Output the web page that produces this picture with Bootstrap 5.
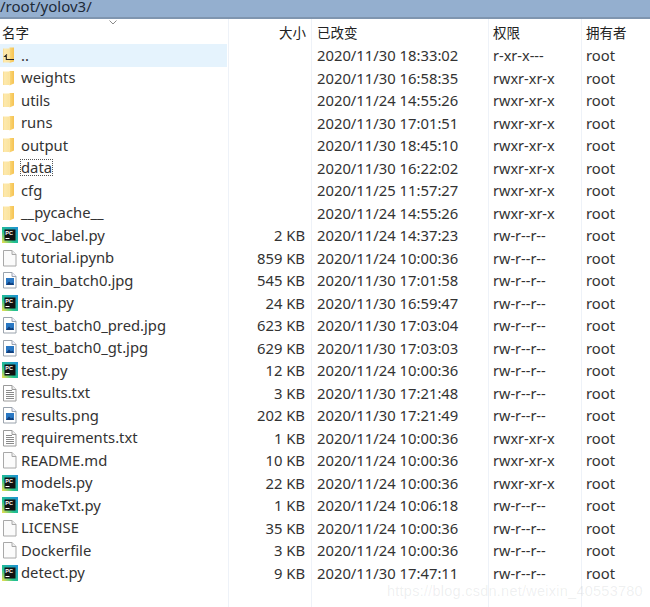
<!DOCTYPE html>
<html lang="zh"><head><meta charset="utf-8"><title>yolov3</title>
<link href="https://cdn.jsdelivr.net/npm/bootstrap@5.3.0/dist/css/bootstrap.min.css" rel="stylesheet">
<style>
html,body{margin:0;height:607px;overflow:hidden;background:#fff}
body{font-family:"Noto Sans","Noto Sans CJK SC",sans-serif;font-size:14.8px;color:#333;position:relative}
.pathbar{height:19px;background:#94afcf;border-bottom:2px solid #7f95af;line-height:12px;font-size:15px;color:#1d2a38;overflow:hidden;white-space:nowrap}
.grid-wrap{height:588px;position:relative}
.gline{position:absolute;top:0;bottom:0;width:1px;background:#eef2f8}
.hdr,.frow{display:grid;grid-template-columns:228px 84px 176px 93px 69px;white-space:nowrap}
.hdr{height:25px;padding-top:1px;align-items:center;font-size:13.5px;font-family:"Noto Sans CJK SC","Noto Sans",sans-serif;color:#222;position:relative}
.frow{height:22.5px;line-height:22.5px;align-items:center}
.cell-name{display:flex;align-items:center;padding-left:2px;gap:3px;height:22.5px}
.cell-name svg{flex:none;width:16px;height:18px}
.cell-name span{position:relative;top:-.5px}
.cell-size{text-align:right;padding-right:7px}
.cell-date{padding-left:5px}
.cell-perm{padding-left:5px;font-size:14.5px}
.cell-own{padding-left:5px}
.sel .cell-name{background:#e5f3fd;margin-right:1px}
.focused{outline:1px dotted #555;outline-offset:-1px;padding:0 1px;line-height:17px;margin-left:-1px}
.sortmark{position:absolute;left:109px;top:1px;width:8px;height:5px}
.hname{padding-left:2px}.hsize{text-align:right;padding-right:6px}.hcol{padding-left:5px}
.wmark{position:absolute;left:387px;top:581px;font-family:"Liberation Sans",sans-serif;font-size:14.5px;letter-spacing:.25px;color:rgba(90,100,110,.1);white-space:nowrap}
</style></head>
<body>
<svg width="0" height="0" class="position-absolute">
<defs>
<linearGradient id="fg" x1="0" x2="1"><stop offset="0" stop-color="#f8d98a"/><stop offset=".25" stop-color="#fde9ae"/><stop offset="1" stop-color="#fbe39c"/></linearGradient>
<linearGradient id="fr" x1="0" x2="1"><stop offset="0" stop-color="#fbd878"/><stop offset="1" stop-color="#f5c253"/></linearGradient>
<linearGradient id="pg" x1="0" y1="1" x2="1" y2="0"><stop offset="0" stop-color="#f5e04a"/><stop offset=".4" stop-color="#21c28e"/><stop offset="1" stop-color="#1f8fd8"/></linearGradient>
<symbol id="i-folder" viewBox="0 0 16 18"><path d="M1 2.500h6.500v13.500H1z" fill="url(#fg)"/><path d="M7.500 2h4.500v12.500l-4.500 2z" fill="url(#fr)"/></symbol>
<symbol id="i-up" viewBox="0 0 16 18"><path d="M1 2.500h6.500v14H1z" fill="url(#fg)"/><path d="M7.500 1.500h4.500v14l-4.500 1.500z" fill="url(#fr)"/><path d="M5 8.500L2.800 10.500H4.300V13.500H12" fill="none" stroke="#222" stroke-width="1.100"/></symbol>
<symbol id="i-pc" viewBox="0 0 16 18"><rect x="0" y="1" width="16" height="16" fill="url(#pg)"/><rect x="2.500" y="3.500" width="11" height="11" fill="#111"/><text x="3.300" y="9" font-family="Liberation Sans,sans-serif" font-size="5.500" font-weight="700" fill="#fff">PC</text><rect x="3.500" y="12" width="4" height="1" fill="#fff"/></symbol>
<symbol id="i-file" viewBox="0 0 16 18"><path d="M1.500 1.500h8.500l4 4v11.500H1.500z" fill="#fbfbfb" stroke="#a8a8a8"/><path d="M10 1.500v4h4" fill="#eee" stroke="#a8a8a8"/></symbol>
<symbol id="i-text" viewBox="0 0 16 18"><path d="M1.500 1.500h8.500l4 4v11.500H1.500z" fill="#fff" stroke="#9a9a9a"/><path d="M10 1.500v4h4" fill="#eee" stroke="#9a9a9a"/><path d="M4 6.500h6M4 8.500h8M4 10.500h8M4 12.500h8M4 14.500h8" stroke="#8a8a8a"/></symbol>
<symbol id="i-img" viewBox="0 0 16 18"><path d="M1.500 1.500h8.500l4 4v11.500H1.500z" fill="#fff" stroke="#9aa3ad"/><path d="M10 1.500v4h4" fill="#eef" stroke="#9aa3ad"/><rect x="4" y="7" width="8" height="7" fill="#2a78c4"/><path d="M4 14l3-3.500 2 2 1.500-1 1.500 2.500z" fill="#123f7c"/></symbol>
</defs></svg>
<div class="pathbar">/root/yolov3/</div>
<div class="grid-wrap">
<span class="gline" style="left:228px"></span><span class="gline" style="left:311px"></span><span class="gline" style="left:488px"></span><span class="gline" style="left:581px"></span>
<div class="hdr"><svg class="sortmark" viewBox="0 0 8 5"><path d="M.5.500L4 4 7.500.500" fill="none" stroke="#8a8a8a"/></svg><div class="hname">名字</div><div class="hsize">大小</div><div class="hcol">已改变</div><div class="hcol">权限</div><div class="hcol">拥有者</div></div>
<div class="frow sel"><div class="cell-name"><svg><use href="#i-up"/></svg><span>..</span></div><div class="cell-size"></div><div class="cell-date">2020/11/30 18:33:02</div><div class="cell-perm">r-xr-x---</div><div class="cell-own">root</div></div>
<div class="frow"><div class="cell-name"><svg><use href="#i-folder"/></svg><span>weights</span></div><div class="cell-size"></div><div class="cell-date">2020/11/30 16:58:35</div><div class="cell-perm">rwxr-xr-x</div><div class="cell-own">root</div></div>
<div class="frow"><div class="cell-name"><svg><use href="#i-folder"/></svg><span>utils</span></div><div class="cell-size"></div><div class="cell-date">2020/11/24 14:55:26</div><div class="cell-perm">rwxr-xr-x</div><div class="cell-own">root</div></div>
<div class="frow"><div class="cell-name"><svg><use href="#i-folder"/></svg><span>runs</span></div><div class="cell-size"></div><div class="cell-date">2020/11/30 17:01:51</div><div class="cell-perm">rwxr-xr-x</div><div class="cell-own">root</div></div>
<div class="frow"><div class="cell-name"><svg><use href="#i-folder"/></svg><span>output</span></div><div class="cell-size"></div><div class="cell-date">2020/11/30 18:45:10</div><div class="cell-perm">rwxr-xr-x</div><div class="cell-own">root</div></div>
<div class="frow"><div class="cell-name"><svg><use href="#i-folder"/></svg><span class="focused">data</span></div><div class="cell-size"></div><div class="cell-date">2020/11/30 16:22:02</div><div class="cell-perm">rwxr-xr-x</div><div class="cell-own">root</div></div>
<div class="frow"><div class="cell-name"><svg><use href="#i-folder"/></svg><span>cfg</span></div><div class="cell-size"></div><div class="cell-date">2020/11/25 11:57:27</div><div class="cell-perm">rwxr-xr-x</div><div class="cell-own">root</div></div>
<div class="frow"><div class="cell-name"><svg><use href="#i-folder"/></svg><span>__pycache__</span></div><div class="cell-size"></div><div class="cell-date">2020/11/24 14:55:26</div><div class="cell-perm">rwxr-xr-x</div><div class="cell-own">root</div></div>
<div class="frow"><div class="cell-name"><svg><use href="#i-pc"/></svg><span>voc_label.py</span></div><div class="cell-size">2 KB</div><div class="cell-date">2020/11/24 14:37:23</div><div class="cell-perm">rw-r--r--</div><div class="cell-own">root</div></div>
<div class="frow"><div class="cell-name"><svg><use href="#i-file"/></svg><span>tutorial.ipynb</span></div><div class="cell-size">859 KB</div><div class="cell-date">2020/11/24 10:00:36</div><div class="cell-perm">rw-r--r--</div><div class="cell-own">root</div></div>
<div class="frow"><div class="cell-name"><svg><use href="#i-img"/></svg><span>train_batch0.jpg</span></div><div class="cell-size">545 KB</div><div class="cell-date">2020/11/30 17:01:58</div><div class="cell-perm">rw-r--r--</div><div class="cell-own">root</div></div>
<div class="frow"><div class="cell-name"><svg><use href="#i-pc"/></svg><span>train.py</span></div><div class="cell-size">24 KB</div><div class="cell-date">2020/11/30 16:59:47</div><div class="cell-perm">rw-r--r--</div><div class="cell-own">root</div></div>
<div class="frow"><div class="cell-name"><svg><use href="#i-img"/></svg><span>test_batch0_pred.jpg</span></div><div class="cell-size">623 KB</div><div class="cell-date">2020/11/30 17:03:04</div><div class="cell-perm">rw-r--r--</div><div class="cell-own">root</div></div>
<div class="frow"><div class="cell-name"><svg><use href="#i-img"/></svg><span>test_batch0_gt.jpg</span></div><div class="cell-size">629 KB</div><div class="cell-date">2020/11/30 17:03:03</div><div class="cell-perm">rw-r--r--</div><div class="cell-own">root</div></div>
<div class="frow"><div class="cell-name"><svg><use href="#i-pc"/></svg><span>test.py</span></div><div class="cell-size">12 KB</div><div class="cell-date">2020/11/24 10:00:36</div><div class="cell-perm">rw-r--r--</div><div class="cell-own">root</div></div>
<div class="frow"><div class="cell-name"><svg><use href="#i-text"/></svg><span>results.txt</span></div><div class="cell-size">3 KB</div><div class="cell-date">2020/11/30 17:21:48</div><div class="cell-perm">rw-r--r--</div><div class="cell-own">root</div></div>
<div class="frow"><div class="cell-name"><svg><use href="#i-img"/></svg><span>results.png</span></div><div class="cell-size">202 KB</div><div class="cell-date">2020/11/30 17:21:49</div><div class="cell-perm">rw-r--r--</div><div class="cell-own">root</div></div>
<div class="frow"><div class="cell-name"><svg><use href="#i-text"/></svg><span>requirements.txt</span></div><div class="cell-size">1 KB</div><div class="cell-date">2020/11/24 10:00:36</div><div class="cell-perm">rwxr-xr-x</div><div class="cell-own">root</div></div>
<div class="frow"><div class="cell-name"><svg><use href="#i-file"/></svg><span>README.md</span></div><div class="cell-size">10 KB</div><div class="cell-date">2020/11/24 10:00:36</div><div class="cell-perm">rwxr-xr-x</div><div class="cell-own">root</div></div>
<div class="frow"><div class="cell-name"><svg><use href="#i-pc"/></svg><span>models.py</span></div><div class="cell-size">22 KB</div><div class="cell-date">2020/11/24 10:00:36</div><div class="cell-perm">rwxr-xr-x</div><div class="cell-own">root</div></div>
<div class="frow"><div class="cell-name"><svg><use href="#i-pc"/></svg><span>makeTxt.py</span></div><div class="cell-size">1 KB</div><div class="cell-date">2020/11/24 10:06:18</div><div class="cell-perm">rw-r--r--</div><div class="cell-own">root</div></div>
<div class="frow"><div class="cell-name"><svg><use href="#i-file"/></svg><span>LICENSE</span></div><div class="cell-size">35 KB</div><div class="cell-date">2020/11/24 10:00:36</div><div class="cell-perm">rw-r--r--</div><div class="cell-own">root</div></div>
<div class="frow"><div class="cell-name"><svg><use href="#i-file"/></svg><span>Dockerfile</span></div><div class="cell-size">3 KB</div><div class="cell-date">2020/11/24 10:00:36</div><div class="cell-perm">rw-r--r--</div><div class="cell-own">root</div></div>
<div class="frow"><div class="cell-name"><svg><use href="#i-pc"/></svg><span>detect.py</span></div><div class="cell-size">9 KB</div><div class="cell-date">2020/11/30 17:47:11</div><div class="cell-perm">rw-r--r--</div><div class="cell-own">root</div></div>
</div>
<div class="wmark">https://blog.csdn.net/weixin_40553780</div>
<script src="https://cdn.jsdelivr.net/npm/bootstrap@5.3.0/dist/js/bootstrap.bundle.min.js"></script>
</body></html>
